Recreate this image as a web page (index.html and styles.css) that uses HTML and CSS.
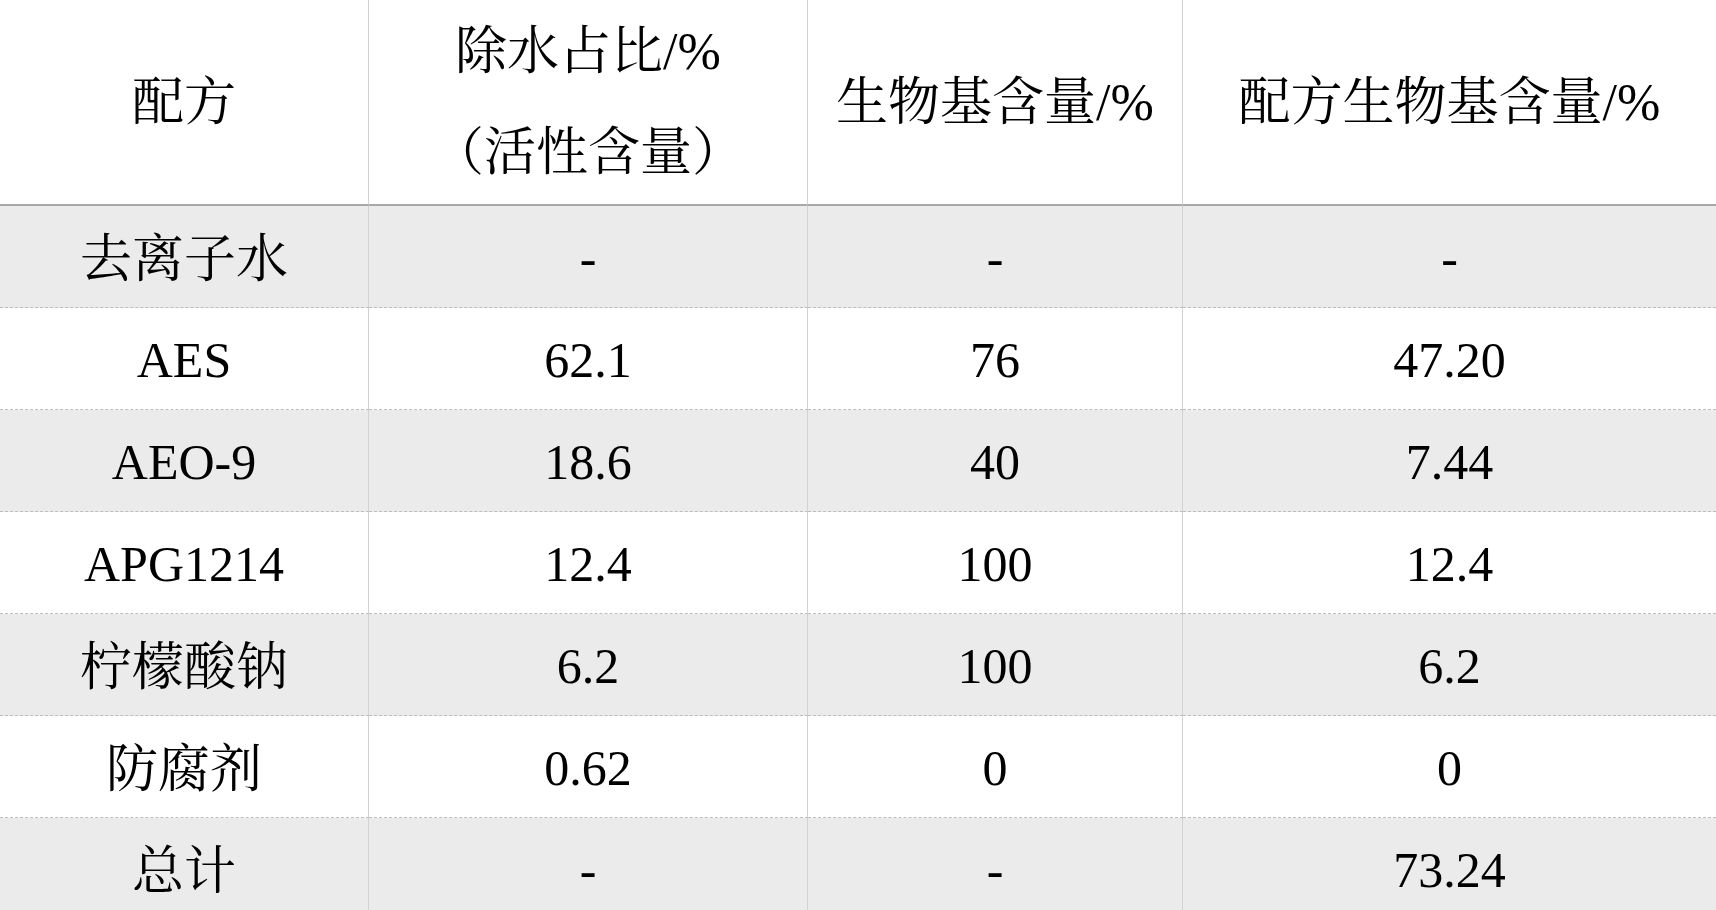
FILE: index.html
```html
<!DOCTYPE html>
<html lang="zh-CN">
<head>
<meta charset="utf-8">
<title>配方生物基含量</title>
<link rel="stylesheet" href="styles.css">
</head>
<body>
<table class="grid">
  <colgroup>
    <col class="c1"><col class="c2"><col class="c3"><col class="c4">
  </colgroup>
  <thead>
    <tr class="head">
      <th>配方</th>
      <th>除水占比/%<br>（活性含量）</th>
      <th>生物基含量/%</th>
      <th>配方生物基含量/%</th>
    </tr>
  </thead>
  <tbody>
    <tr class="shade"><td class="zh">去离子水</td><td>-</td><td>-</td><td>-</td></tr>
    <tr><td>AES</td><td>62.1</td><td>76</td><td>47.20</td></tr>
    <tr class="shade"><td>AEO-9</td><td>18.6</td><td>40</td><td>7.44</td></tr>
    <tr><td>APG1214</td><td>12.4</td><td>100</td><td>12.4</td></tr>
    <tr class="shade"><td class="zh">柠檬酸钠</td><td>6.2</td><td>100</td><td>6.2</td></tr>
    <tr><td class="zh">防腐剂</td><td>0.62</td><td>0</td><td>0</td></tr>
    <tr class="shade"><td class="zh">总计</td><td>-</td><td>-</td><td>73.24</td></tr>
  </tbody>
</table>
</body>
</html>
```

FILE: styles.css
```css
html, body {
  margin: 0;
  padding: 0;
  background: #ffffff;
  overflow: hidden;
}

.grid {
  width: 1716px;
  table-layout: fixed;
  border-collapse: separate;
  border-spacing: 0;
  font-family: "Liberation Serif", "Noto Serif CJK SC", "Noto Sans CJK SC", serif;
  font-size: 50px;
  color: #000000;
}

.c1 { width: 369px; }
.c2 { width: 439px; }
.c3 { width: 375px; }
.c4 { width: 533px; }

.grid th,
.grid td {
  box-sizing: border-box;
  padding: 0;
  text-align: center;
  vertical-align: middle;
  font-weight: normal;
  border-right: 1px solid #d2d2d2;
}

.grid th:last-child,
.grid td:last-child {
  border-right: none;
}

.head th {
  height: 206px;
  line-height: 101px;
  font-size: 52px;
  border-bottom: 2px solid #a8a8a8;
}

.grid td {
  height: 102px;
  line-height: 60px;
  padding-top: 3px;
  border-bottom: 1px dashed #bdbdbd;
}

.grid td.zh {
  font-size: 52px;
  padding-top: 6px;
}

.shade td {
  background: #ebebeb;
}
```
